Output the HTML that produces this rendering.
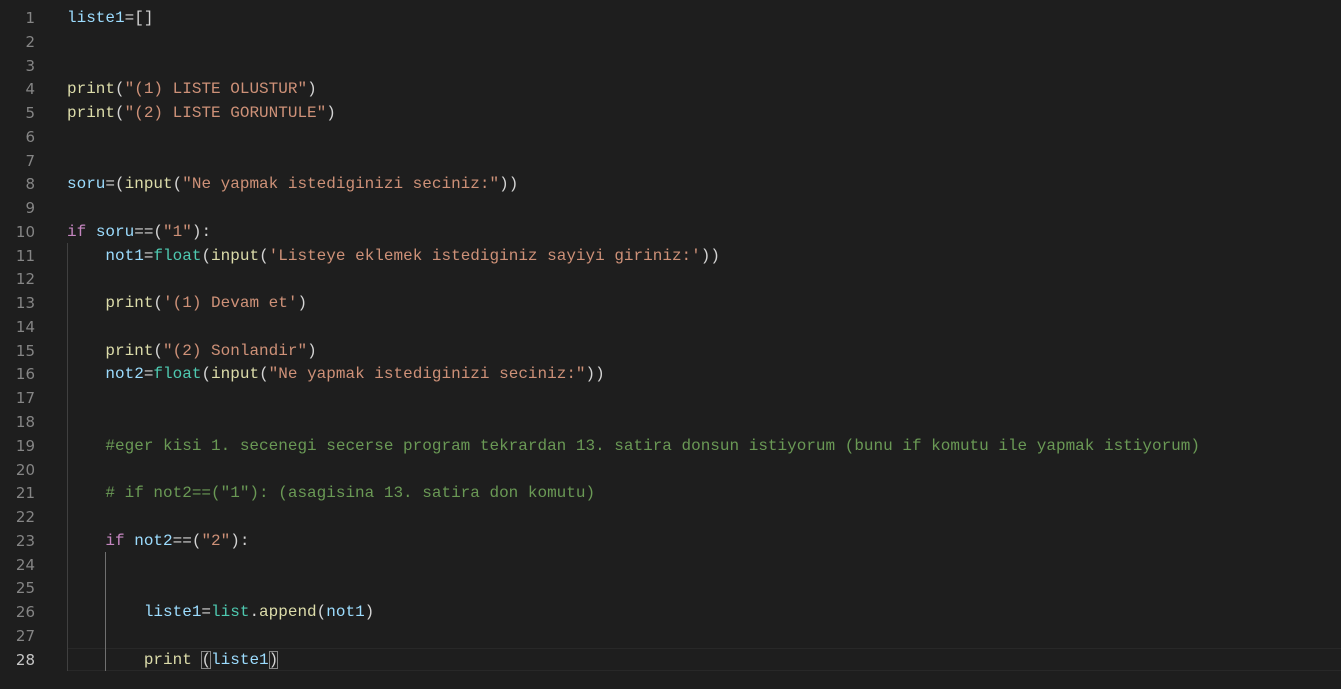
<!DOCTYPE html>
<html><head><meta charset="utf-8"><style>
html,body{margin:0;padding:0;background:#1e1e1e;width:1341px;height:689px;overflow:hidden}
.ed{position:absolute;left:0;top:7px;width:1341px;font-family:"Liberation Mono",monospace;font-size:16px;line-height:23.78px;color:#d4d4d4}
.l{height:23.78px;white-space:pre;position:relative}
.n{position:absolute;left:0;width:35px;text-align:right;color:#858585;font-family:"DejaVu Sans",sans-serif;font-size:15px}
.c{position:absolute;left:67px}
.v{color:#9cdcfe}.f{color:#dcdcaa}.s{color:#ce9178}.k{color:#c586c0}.b{color:#4ec9b0}.m{color:#6a9955}
.act .n{color:#c6c6c6}
.hl{position:absolute;left:67px;right:0;top:648px;height:21px;border:1px solid #282828;border-right:none}
.g{position:absolute;width:1px;background:#404040}
.bb{outline:1px solid #888;outline-offset:-1px}
</style></head><body>
<div class="hl"></div>
<div class="g" style="left:67px;top:243px;height:428px"></div>
<div class="g" style="left:105px;top:552px;height:119px;background:#707070"></div>
<div class="ed">
<div class="l"><span class="n">1</span><span class="c"><span class="v">liste1</span>=[]</span></div>
<div class="l"><span class="n">2</span></div>
<div class="l"><span class="n">3</span></div>
<div class="l"><span class="n">4</span><span class="c"><span class="f">print</span>(<span class="s">"(1) LISTE OLUSTUR"</span>)</span></div>
<div class="l"><span class="n">5</span><span class="c"><span class="f">print</span>(<span class="s">"(2) LISTE GORUNTULE"</span>)</span></div>
<div class="l"><span class="n">6</span></div>
<div class="l"><span class="n">7</span></div>
<div class="l"><span class="n">8</span><span class="c"><span class="v">soru</span>=(<span class="f">input</span>(<span class="s">"Ne yapmak istediginizi seciniz:"</span>))</span></div>
<div class="l"><span class="n">9</span></div>
<div class="l"><span class="n">10</span><span class="c"><span class="k">if</span> <span class="v">soru</span>==(<span class="s">"1"</span>):</span></div>
<div class="l"><span class="n">11</span><span class="c">    <span class="v">not1</span>=<span class="b">float</span>(<span class="f">input</span>(<span class="s">'Listeye eklemek istediginiz sayiyi giriniz:'</span>))</span></div>
<div class="l"><span class="n">12</span></div>
<div class="l"><span class="n">13</span><span class="c">    <span class="f">print</span>(<span class="s">'(1) Devam et'</span>)</span></div>
<div class="l"><span class="n">14</span></div>
<div class="l"><span class="n">15</span><span class="c">    <span class="f">print</span>(<span class="s">"(2) Sonlandir"</span>)</span></div>
<div class="l"><span class="n">16</span><span class="c">    <span class="v">not2</span>=<span class="b">float</span>(<span class="f">input</span>(<span class="s">"Ne yapmak istediginizi seciniz:"</span>))</span></div>
<div class="l"><span class="n">17</span></div>
<div class="l"><span class="n">18</span></div>
<div class="l"><span class="n">19</span><span class="c">    <span class="m">#eger kisi 1. secenegi secerse program tekrardan 13. satira donsun istiyorum (bunu if komutu ile yapmak istiyorum)</span></span></div>
<div class="l"><span class="n">20</span></div>
<div class="l"><span class="n">21</span><span class="c">    <span class="m"># if not2==("1"): (asagisina 13. satira don komutu)</span></span></div>
<div class="l"><span class="n">22</span></div>
<div class="l"><span class="n">23</span><span class="c">    <span class="k">if</span> <span class="v">not2</span>==(<span class="s">"2"</span>):</span></div>
<div class="l"><span class="n">24</span></div>
<div class="l"><span class="n">25</span></div>
<div class="l"><span class="n">26</span><span class="c">        <span class="v">liste1</span>=<span class="b">list</span>.<span class="f">append</span>(<span class="v">not1</span>)</span></div>
<div class="l"><span class="n">27</span></div>
<div class="l act"><span class="n">28</span><span class="c">        <span class="f">print</span> <span class="bb">(</span><span class="v">liste1</span><span class="bb">)</span></span></div>
</div>
</body></html>
